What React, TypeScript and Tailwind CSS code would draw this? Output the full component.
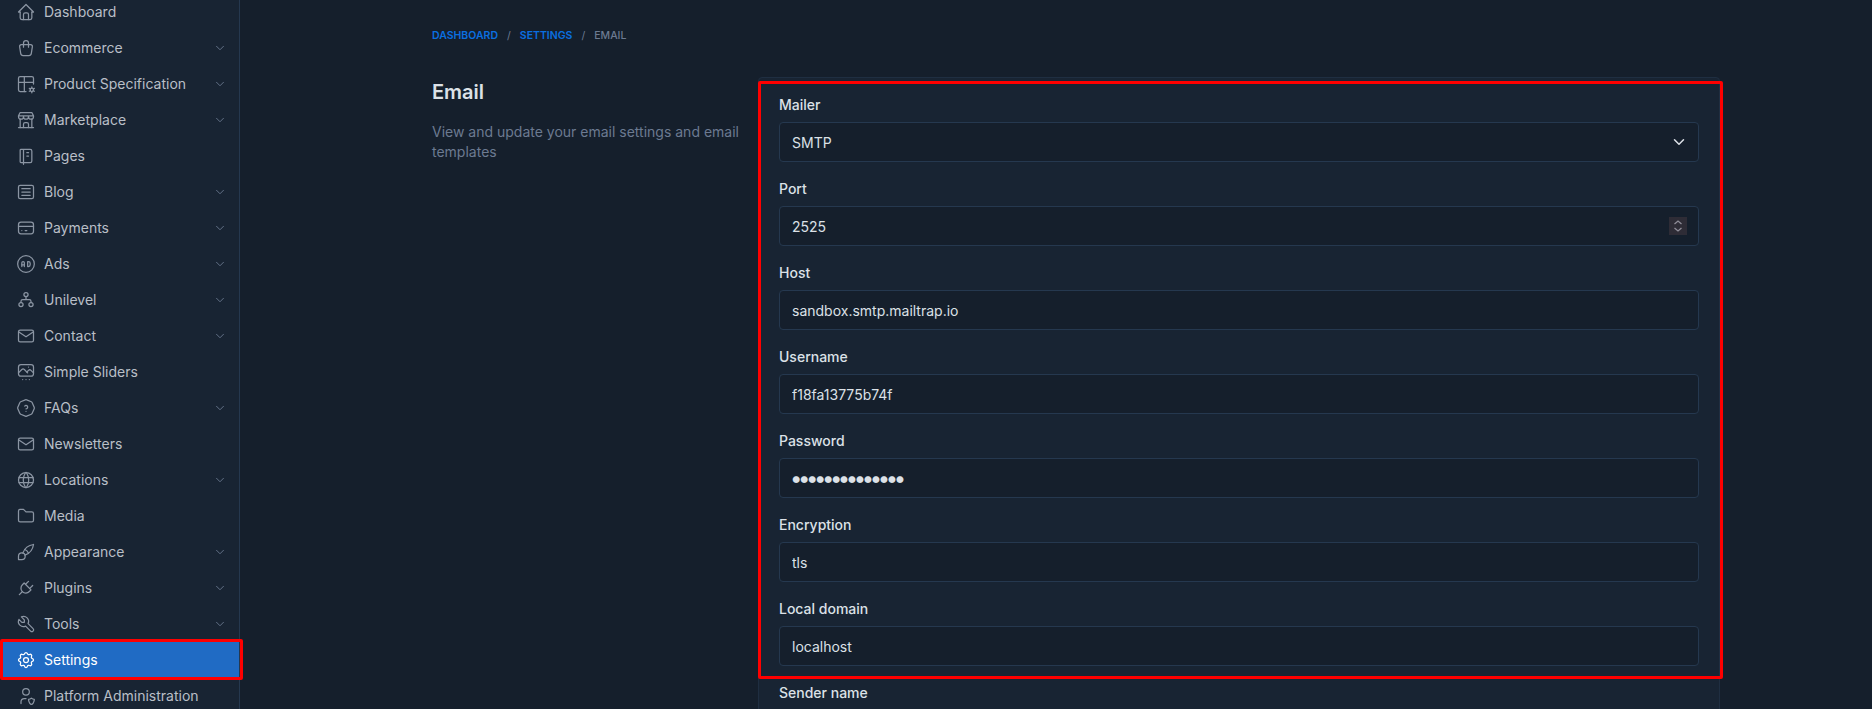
import React from "react";
import {
  TbHome,
  TbShoppingBag,
  TbTableOptions,
  TbBuildingStore,
  TbNotebook,
  TbArticle,
  TbCreditCard,
  TbAdCircle,
  TbMail,
  TbSlideshow,
  TbHelpOctagon,
  TbWorld,
  TbFolder,
  TbBrush,
  TbPlug,
  TbTool,
  TbSettings,
  TbUserShield,
  TbChevronDown,
} from "react-icons/tb";

const UnilevelIcon = ({ size, strokeWidth, className }: { size?: number; strokeWidth?: number; className?: string }) => (
  <svg
    width={size}
    height={size}
    viewBox="0 0 24 24"
    fill="none"
    stroke="currentColor"
    strokeWidth={strokeWidth}
    strokeLinecap="round"
    strokeLinejoin="round"
    className={className}
  >
    <circle cx="12" cy="5.5" r="2.5" />
    <circle cx="6" cy="17.5" r="2.5" />
    <circle cx="18" cy="17.5" r="2.5" />
    <path d="M12 8v3.5M6 15v-1.5a2 2 0 0 1 2-2h8a2 2 0 0 1 2 2V15" />
  </svg>
);

const menu = [
  { icon: TbHome, label: "Dashboard" },
  { icon: TbShoppingBag, label: "Ecommerce", more: true },
  { icon: TbTableOptions, label: "Product Specification", more: true },
  { icon: TbBuildingStore, label: "Marketplace", more: true },
  { icon: TbNotebook, label: "Pages" },
  { icon: TbArticle, label: "Blog", more: true },
  { icon: TbCreditCard, label: "Payments", more: true },
  { icon: TbAdCircle, label: "Ads", more: true },
  { icon: UnilevelIcon, label: "Unilevel", more: true },
  { icon: TbMail, label: "Contact", more: true },
  { icon: TbSlideshow, label: "Simple Sliders" },
  { icon: TbHelpOctagon, label: "FAQs", more: true },
  { icon: TbMail, label: "Newsletters" },
  { icon: TbWorld, label: "Locations", more: true },
  { icon: TbFolder, label: "Media" },
  { icon: TbBrush, label: "Appearance", more: true },
  { icon: TbPlug, label: "Plugins", more: true },
  { icon: TbTool, label: "Tools", more: true },
  { icon: TbSettings, label: "Settings", active: true },
  { icon: TbUserShield, label: "Platform Administration" },
];

const inputClass =
  "block h-10 w-full rounded border border-[#25384f] bg-[#151f2c] px-3 text-sm text-[#dce1e7] outline-none";

const Field = ({ label, children }: { label: string; children: React.ReactNode }) => (
  <div className="mb-[17px]">
    <label className="mb-[7px] block h-5 text-sm font-medium leading-5 text-[#dce1e7]">{label}</label>
    {children}
  </div>
);

const App = () => {
  return (
    <div className="relative flex h-[709px] w-full overflow-hidden bg-[#151f2c] font-['Inter',sans-serif] text-sm">
      {/* Sidebar */}
      <aside className="w-[240px] shrink-0 overflow-hidden border-r border-[#25384f] bg-[#182433]">
        <nav className="-mt-1.5">
          {menu.map((item) => {
            const Icon = item.icon;
            return (
              <div
                key={item.label}
                className={
                  item.active
                    ? "flex h-9 items-center bg-[#206bc4] px-4 text-white"
                    : "flex h-9 items-center px-4 text-[#b9bfc7]"
                }
              >
                <Icon size={20} strokeWidth={1.5} className={item.active ? "text-white" : "text-[#8b95a3]"} />
                <span className="ml-2 flex-1 whitespace-nowrap">{item.label}</span>
                {item.more && <TbChevronDown size={14} strokeWidth={1.5} className="mr-[-4px] text-[#6c7a91]" />}
              </div>
            );
          })}
        </nav>
      </aside>

      {/* Main */}
      <main className="min-w-0 flex-1 pl-[192px] pr-[152px] pt-[28px]">
        <div className="flex h-4 items-center text-[10.5px] font-semibold uppercase leading-4">
          <span className="text-[#0a6fe0]">Dashboard</span>
          <span className="mx-[9px] font-normal text-[#6c7a91]">/</span>
          <span className="text-[#0a6fe0]">Settings</span>
          <span className="mx-[9px] font-normal text-[#6c7a91]">/</span>
          <span className="font-medium text-[#6c7a91]">Email</span>
        </div>

        <div className="mt-[33px] flex">
          <div className="w-[326px] shrink-0 pr-3">
            <h2 className="mt-px text-xl font-semibold leading-7 text-[#dce1e7]">Email</h2>
            <p className="mt-4 text-sm leading-5 text-[#6c7a91]">
              View and update your email settings and email templates
            </p>
          </div>

          <div className="min-w-0 flex-1 rounded border border-[#1f2e41] bg-[#182433] px-5 pt-[17px]">
            <Field label="Mailer">
              <div className={inputClass + " flex items-center justify-between"}>
                <span className="pt-0.5">SMTP</span>
                <TbChevronDown size={18} strokeWidth={2} className="mr-[-2px] text-[#dce1e7]" />
              </div>
            </Field>
            <Field label="Port">
              <div className={inputClass + " flex items-center justify-between"}>
                <span className="pt-0.5">2525</span>
                <span className="mr-[-1px] flex h-[18px] w-[18px] items-center justify-center bg-[#2e2c36] text-[#8f8d98]">
                  <svg width="10" height="14" viewBox="0 0 10 14" fill="none" stroke="currentColor" strokeWidth="1.3">
                    <path d="M1.5 5 5 2l3.5 3M1.5 9 5 12l3.5-3" />
                  </svg>
                </span>
              </div>
            </Field>
            <Field label="Host">
              <input readOnly value="sandbox.smtp.mailtrap.io" className={inputClass} />
            </Field>
            <Field label="Username">
              <input readOnly value="f18fa13775b74f" className={inputClass} />
            </Field>
            <Field label="Password">
              <input
                readOnly
                type="password"
                value="••••••••••••••"
                className="block h-10 w-full rounded border border-[#25384f] bg-[#151f2c] pl-2.5 pr-3 text-[22px] tracking-[-4.4px] text-[#dce1e7] outline-none"
              />
            </Field>
            <Field label="Encryption">
              <input readOnly value="tls" className={inputClass} />
            </Field>
            <Field label="Local domain">
              <input readOnly value="localhost" className={inputClass} />
            </Field>
            <Field label="Sender name">
              <input readOnly value="" className={inputClass} />
            </Field>
          </div>
        </div>
      </main>

      {/* Red annotation boxes */}
      <div className="pointer-events-none absolute left-[758px] top-[81px] h-[598px] w-[965px] rounded-[2px] border-[3px] border-[#ff0000]" />
      <div className="pointer-events-none absolute left-0 top-[639px] h-[41px] w-[243px] rounded-[2px] border-[3px] border-[#ff0000]" />
    </div>
  );
};

export default App;
